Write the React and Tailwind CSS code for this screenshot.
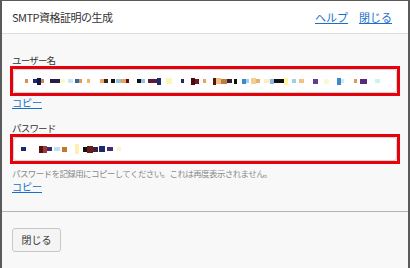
import React from 'react';

// pixelated (masked) values, [gap before, width, height, colour]
const userMask = [
  [11, 3, 4, '#d9914a'], [5, 4, 4, '#1b2a6b'], [0, 4, 7, '#0d1550'], [0, 3, 4, '#c88a4a'],
  [6, 5, 4, '#2a1a4a'], [0, 5, 4, '#20204a'], [0, 5, 4, '#fff7c8'], [3, 5, 4, '#cfe4ee'],
  [2, 4, 4, '#2f6aa8'], [0, 3, 4, '#e29a52'], [5, 3, 4, '#f2b46a'], [10, 4, 4, '#f0a860'],
  [0, 4, 4, '#3a2420'], [3, 4, 4, '#111111'], [1, 5, 4, '#8fc3e8'], [0, 5, 4, '#eaa25a'],
  [0, 3, 4, '#5a1010'], [8, 4, 4, '#111111'], [0, 4, 4, '#8fc3e8'], [3, 9, 4, '#5a1a3a'],
  [0, 4, 7, '#1b2a6b'], [5, 6, 6, '#fff4b8'], [9, 3, 4, '#1b2a6b'], [7, 4, 7, '#4a0a10'],
  [0, 4, 5, '#6a1a2a'], [4, 3, 4, '#e9a45a'], [7, 3, 7, '#5a1010'], [0, 5, 6, '#f0c07a'],
  [0, 6, 5, '#c07a4a'], [0, 5, 4, '#302030'], [2, 3, 5, '#111111'], [5, 4, 5, '#3b8ad0'],
  [0, 3, 4, '#9cd0f0'], [2, 5, 6, '#f4d090'], [0, 4, 4, '#e8b070'], [4, 6, 4, '#ffeec0'],
  [0, 4, 5, '#8ab8e0'], [0, 10, 4, '#111111'], [0, 4, 7, '#fff2a0'], [4, 4, 4, '#9cd0f0'],
  [3, 5, 4, '#f2c080'], [9, 5, 5, '#6a3a8a'], [6, 5, 5, '#fff7d0'], [8, 4, 7, '#3b8ad0'],
  [0, 3, 4, '#cfe8f5'], [10, 3, 4, '#e09a50'], [3, 7, 5, '#5a2a7a'], [8, 5, 4, '#c8f4f4'],
];

const passMask = [
  [7, 5, 4, '#1b2a6b'], [13, 4, 7, '#5a1010'], [0, 4, 7, '#9b3a3a'], [0, 5, 4, '#3a2a6a'],
  [2, 6, 4, '#bfe0f2'], [2, 5, 5, '#c07a30'], [8, 4, 10, '#fff0b0'], [4, 4, 5, '#111111'],
  [0, 6, 7, '#6a1a1a'], [0, 5, 5, '#3a2040'], [1, 6, 6, '#1b2a6b'], [2, 6, 4, '#4a2a6a'],
  [4, 4, 4, '#fff4c8'],
];

function Mask({ data }) {
  return (
    <div className="flex items-center h-full">
      {data.map(([gap, w, h, c], i) => (
        <span
          key={i}
          className="block shrink-0"
          style={{ marginLeft: gap, width: w, height: h, background: c }}
        />
      ))}
    </div>
  );
}

function Field({ label, data }) {
  return (
    <>
      <div className="text-[9.5px] tracking-[-0.8px] leading-[12px] text-[#333]">{label}</div>
      <div className="-mx-[2px] border-[3px] border-[#e8000b] h-[30px]">
        <div className="h-full border border-[#d4d4d4] rounded-[3px] bg-white">
          <Mask data={data} />
        </div>
      </div>
    </>
  );
}

export default function App() {
  return (
    <div
      className="w-[410px] h-[268px] border-t border-x-2 border-[#5a5a5a] bg-[#f8f8f8] flex flex-col"
      style={{ fontFamily: '"Noto Sans CJK JP", "Noto Sans", sans-serif' }}
    >
      <div className="h-[33px] shrink-0 bg-white border-b border-[#dcdcdc] flex items-center justify-between pl-[10px] pr-[16px]">
        <span className="text-[11px] tracking-[-0.5px] text-[#333]">SMTP資格証明の生成</span>
        <div className="flex gap-[11px] text-[11px]">
          <a href="#" className="text-[#1a6fc9] underline">ヘルプ</a>
          <a href="#" className="text-[#1a6fc9] underline">閉じる</a>
        </div>
      </div>

      <div className="px-[10px] pt-[20px] pb-[18px] border-b border-[#b4b4b4]">
        <Field label="ユーザー名" data={userMask} />
        <a href="#" className="block mt-[1px] w-fit text-[10px] leading-[12px] text-[#1a6fc9] underline">コピー</a>

        <div className="mt-[13px]">
          <Field label="パスワード" data={passMask} />
        </div>
        <div className="mt-[3px] text-[8.5px] tracking-[-0.6px] leading-[12px] text-[#8a8a8a]">
          パスワードを記録用にコピーしてください。これは再度表示されません。
        </div>
        <a href="#" className="block mt-[2px] w-fit text-[10px] leading-[12px] text-[#1a6fc9] underline">コピー</a>
      </div>

      <div className="px-[10px] pt-[13px]">
        <button className="h-[24px] w-[49px] text-[10px] text-[#333] bg-[#f4f4f4] border border-[#c8c8c8] rounded-[3px]">
          閉じる
        </button>
      </div>
    </div>
  );
}
